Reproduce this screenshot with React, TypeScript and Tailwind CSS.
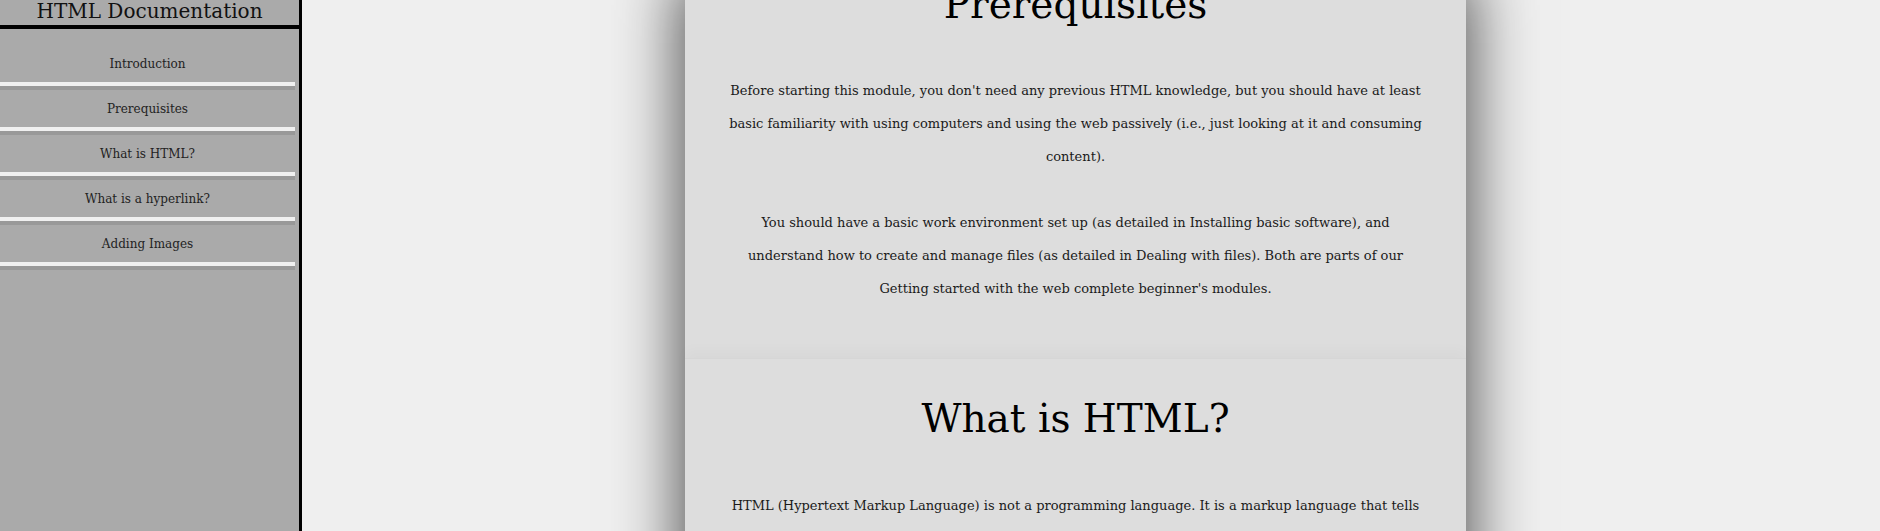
import React from "react";

const navItems = [
  "Introduction",
  "Prerequisites",
  "What is HTML?",
  "What is a hyperlink?",
  "Adding Images",
];

const serif = "font-['DejaVu_Serif','Liberation_Serif',serif]";

export default function App() {
  return (
    <div className={`flex h-[531px] w-full overflow-hidden bg-[#efefef] ${serif}`}>
      <aside className="flex h-full w-[302px] shrink-0 flex-col border-r-[3px] border-black bg-[#aaaaaa]">
        <div className="flex h-[29px] items-end justify-center overflow-hidden border-b-4 border-black pb-[4px]">
          <span className="text-[20px] leading-[20px] text-[#111]">HTML Documentation</span>
        </div>
        <nav className="flex flex-col pt-[16px]">
          {navItems.map((item) => (
            <div key={item} className="flex w-[295px] flex-col">
              <div className="flex h-[37px] items-center justify-center text-[12px] text-[#222]">
                {item}
              </div>
              <div className="h-[4px] bg-[#f0f0f0]" />
              <div className="h-[4px] bg-[#999999]" />
            </div>
          ))}
        </nav>
      </aside>
      <main className="flex-1 pl-[383px]">
        <div className="mt-[-19px] w-[781px] bg-[#dddddd] text-center shadow-[0_0_60px_6px_rgba(0,0,0,0.65)]">
          <section className="px-[40px] pb-[53px]">
            <h2 className="text-[39px] leading-[48px] text-black">Prerequisites</h2>
            <p className="mt-[45px] text-[13px] leading-[33px] text-[#1a1a1a]">
              Before starting this module, you don't need any previous HTML knowledge, but you should have at least
              <br />
              basic familiarity with using computers and using the web passively (i.e., just looking at it and consuming
              <br />
              content).
            </p>
            <p className="mt-[33px] text-[13px] leading-[33px] text-[#1a1a1a]">
              You should have a basic work environment set up (as detailed in Installing basic software), and
              <br />
              understand how to create and manage files (as detailed in Dealing with files). Both are parts of our
              <br />
              Getting started with the web complete beginner's modules.
            </p>
          </section>
          <section className="border-t border-[#d6d6d6] px-[40px] pt-[36px] pb-[60px] shadow-[0_-8px_12px_rgba(0,0,0,0.025)]">
            <h2 className="text-[39px] leading-[48px] text-black">What is HTML?</h2>
            <p className="mt-[46px] text-[13px] leading-[33px] text-[#1a1a1a]">
              HTML (Hypertext Markup Language) is not a programming language. It is a markup language that tells
              <br />
              web browsers how to structure the web pages you visit.
            </p>
          </section>
        </div>
      </main>
    </div>
  );
}
